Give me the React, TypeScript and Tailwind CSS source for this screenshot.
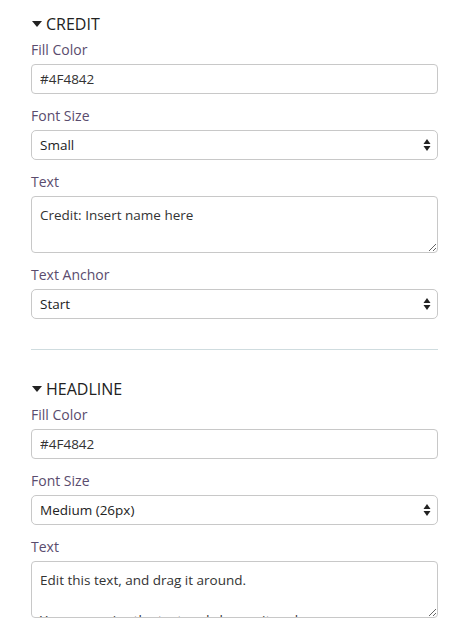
import React from 'react';

const font = { fontFamily: '"Open Sans", "Noto Sans", sans-serif' };

function Caret() {
    return (
        <svg width="10" height="6" viewBox="0 0 10 6" className="shrink-0">
            <path d="M0 0 H10 L5 6 Z" fill="#222" />
        </svg>
    );
}

function SelectArrows() {
    return (
        <svg width="8" height="13" viewBox="0 0 8 13" className="pointer-events-none absolute right-[7px] top-1/2 -translate-y-1/2">
            <path d="M4 0.5 L7.5 5.5 H0.5 Z" fill="#222" />
            <path d="M0.5 7.5 H7.5 L4 12.5 Z" fill="#222" />
        </svg>
    );
}

function Label({ children }: { children: React.ReactNode }) {
    return <label className="block text-[14px] leading-5 text-[#5a4c6e] mb-1">{children}</label>;
}

function TextInput({ value }: { value: string }) {
    return (
        <input
            type="text"
            defaultValue={value}
            className="block w-full h-[30px] px-[8px] text-[13.5px] text-[#333] bg-white border border-[#c8c8c8] rounded-[4px] outline-none"
            style={font}
        />
    );
}

function Select({ value }: { value: string }) {
    return (
        <div className="relative">
            <select
                defaultValue={value}
                className="block w-full h-[30px] pl-[8px] pr-6 text-[13.5px] text-[#222] bg-white border border-[#c8c8c8] rounded-[5px] appearance-none outline-none"
                style={font}
            >
                <option>{value}</option>
            </select>
            <SelectArrows />
        </div>
    );
}

function TextArea({ value }: { value: string }) {
    return (
        <textarea
            defaultValue={value}
            className="block w-full h-[57px] px-[8px] py-2 text-[13.5px] leading-5 text-[#333] bg-white border border-[#c8c8c8] rounded-[4px] outline-none overflow-hidden"
            style={font}
        />
    );
}

function Field({ label, children }: { label: string; children: React.ReactNode }) {
    return (
        <div>
            <Label>{label}</Label>
            {children}
        </div>
    );
}

function SectionHeader({ title }: { title: string }) {
    return (
        <div className="flex items-center gap-[4px] h-[22px] pl-[1px]">
            <Caret />
            <h3 className="text-[16px] leading-[22px] text-[#222] uppercase">{title}</h3>
        </div>
    );
}

export default function App() {
    return (
        <div className="w-[451px] h-[625px] overflow-hidden bg-white pl-[31px] pr-[13px] pt-[13px]" style={font}>
            {/* Credit */}
            <SectionHeader title="Credit" />
            <div className="mt-[5px] flex flex-col gap-3">
                <Field label="Fill Color">
                    <TextInput value="#4F4842" />
                </Field>
                <Field label="Font Size">
                    <Select value="Small" />
                </Field>
                <Field label="Text">
                    <TextArea value="Credit: Insert name here" />
                </Field>
                <Field label="Text Anchor">
                    <Select value="Start" />
                </Field>
            </div>

            <hr className="mt-[30px] mb-[28px] border-0 border-t border-[#cfdcdf]" />

            {/* Headline */}
            <SectionHeader title="Headline" />
            <div className="mt-[5px] flex flex-col gap-3">
                <Field label="Fill Color">
                    <TextInput value="#4F4842" />
                </Field>
                <Field label="Font Size">
                    <Select value="Medium (26px)" />
                </Field>
                <Field label="Text">
                    <TextArea value={'Edit this text, and drag it around.\n\nYou can resize the text and change its color.'} />
                </Field>
            </div>
        </div>
    );
}
